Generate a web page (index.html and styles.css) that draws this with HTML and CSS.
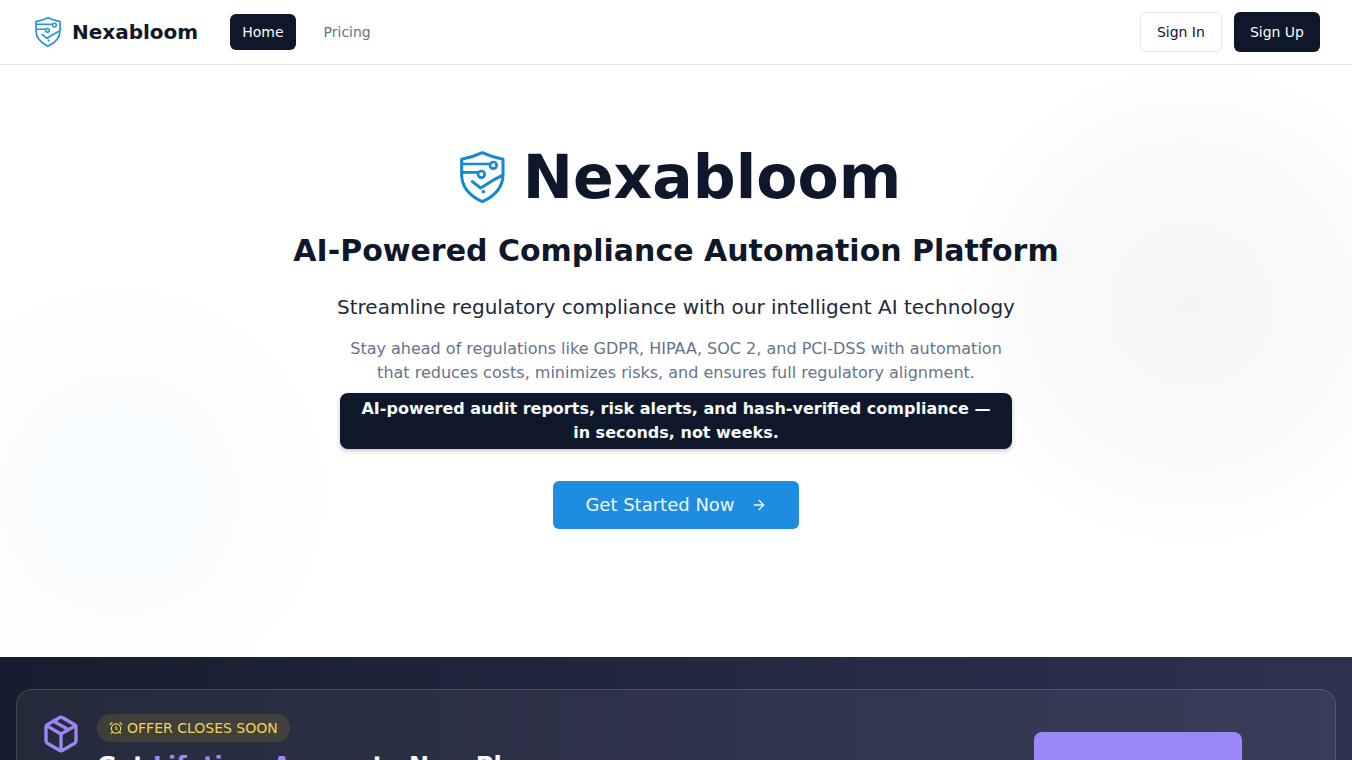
FILE: index.html
```html
<!DOCTYPE html>
<html lang="en">
<head>
<meta charset="utf-8">
<title>Nexabloom</title>
<link rel="stylesheet" href="styles.css">
</head>
<body>
<header class="nav">
  <div class="nav-left">
    <a class="brand" href="#">
      <svg class="shield shield-sm" viewBox="47.5 29 165 165" fill="none" stroke="currentColor" stroke-linecap="round" stroke-linejoin="round"><path stroke-width="9" d="M130 38 Q160 52 192 58 V104 C192 145 162 170 130 185 C98 170 68 145 68 104 V58 Q100 52 130 38 Z"/><path stroke-width="8" d="M70 72 H152 M70 97 H117"/><circle stroke-width="8" cx="163" cy="76" r="10"/><circle stroke-width="8" cx="127" cy="103" r="10"/><path stroke-width="9" d="M100 125 L125 144 L160 122 L190 106"/><circle cx="133" cy="155" r="4" fill="currentColor" stroke-width="3"/></svg>
      <span>Nexabloom</span>
    </a>
    <nav class="links">
      <a class="link link-active" href="#">Home</a>
      <a class="link" href="#">Pricing</a>
    </nav>
  </div>
  <div class="nav-right">
    <a class="btn btn-outline" href="#">Sign In</a>
    <a class="btn btn-dark" href="#">Sign Up</a>
  </div>
</header>

<main>
  <section class="hero">
    <div class="blob blob-left"></div>
    <div class="blob blob-right"></div>
    <div class="hero-inner">
      <h1 class="hero-title">
        <svg class="shield shield-lg" viewBox="36 27 168 168" fill="none" stroke="currentColor" stroke-linecap="round" stroke-linejoin="round"><path stroke-width="9" d="M130 38 Q160 52 192 58 V104 C192 145 162 170 130 185 C98 170 68 145 68 104 V58 Q100 52 130 38 Z"/><path stroke-width="8" d="M70 72 H152 M70 97 H117"/><circle stroke-width="8" cx="163" cy="76" r="10"/><circle stroke-width="8" cx="127" cy="103" r="10"/><path stroke-width="9" d="M100 125 L125 144 L160 122 L190 106"/><circle cx="133" cy="155" r="4" fill="currentColor" stroke-width="3"/></svg>
        <span>Nexabloom</span>
      </h1>
      <h2 class="hero-sub">AI-Powered Compliance Automation Platform</h2>
      <p class="hero-lead">Streamline regulatory compliance with our intelligent AI technology</p>
      <p class="hero-text">Stay ahead of regulations like GDPR, HIPAA, SOC 2, and PCI-DSS with automation that reduces costs, minimizes risks, and ensures full regulatory alignment.</p>
      <p class="hero-pill">AI-powered audit reports, risk alerts, and hash-verified compliance — in seconds, not weeks.</p>
      <a class="cta" href="#">Get Started Now
        <svg class="cta-arrow" viewBox="0 0 24 24" fill="none" stroke="currentColor" stroke-width="2" stroke-linecap="round" stroke-linejoin="round"><path d="M5 12h14M12 5l7 7-7 7"/></svg>
      </a>
    </div>
  </section>

  <section class="offer">
    <div class="offer-card">
      <div class="offer-main">
        <svg class="offer-icon" viewBox="0 0 24 24" fill="none" stroke="currentColor" stroke-width="2" stroke-linecap="round" stroke-linejoin="round"><path d="M21 8a2 2 0 0 0-1-1.73l-7-4a2 2 0 0 0-2 0l-7 4A2 2 0 0 0 3 8v8a2 2 0 0 0 1 1.73l7 4a2 2 0 0 0 2 0l7-4A2 2 0 0 0 21 16Z"/><path d="m3.3 7 8.7 5 8.7-5"/><path d="M12 22V12"/><path d="m7.5 4.27 9 5.15"/></svg>
        <div class="offer-copy">
          <span class="badge">
            <svg class="badge-icon" viewBox="0 0 24 24" fill="none" stroke="currentColor" stroke-width="2" stroke-linecap="round" stroke-linejoin="round"><circle cx="12" cy="13" r="8"/><path d="M12 9v4l2 2"/><path d="M5 3 2 6"/><path d="m22 6-3-3"/><path d="M6.38 18.7 4 21"/><path d="M17.64 18.67 20 21"/></svg>
            OFFER CLOSES SOON
          </span>
          <h3 class="offer-title">Get <em>Lifetime Access</em> to New Plans</h3>
        </div>
      </div>
      <div class="offer-side">
        <a class="offer-btn" href="#">Claim Offer</a>
      </div>
    </div>
  </section>
</main>
</body>
</html>
```
FILE: styles.css
```css
* { box-sizing: border-box; }
html, body { margin: 0; padding: 0; }
body {
  font-family: "DejaVu Sans", sans-serif;
  color: #0f172a;
  background: #fff;
}
a { text-decoration: none; color: inherit; }
h1, h2, h3, p { margin: 0; }

.nav {
  height: 65px;
  padding: 0 32px;
  display: flex;
  align-items: center;
  justify-content: space-between;
  background: #fff;
  border-bottom: 1px solid #e5e7eb;
}
.nav-left { display: flex; align-items: center; gap: 32px; }
.brand {
  display: flex;
  align-items: center;
  gap: 8px;
  font-size: 20px;
  font-weight: 700;
  line-height: 28px;
  color: #0f172a;
}
.shield { color: #1488d0; flex: none; display: block; }
.shield-sm { width: 32px; height: 32px; color: #2a94d8; }
.shield-lg { width: 56px; height: 56px; }
.links { display: flex; align-items: center; gap: 4px; }
.link {
  font-size: 14px;
  line-height: 20px;
  padding: 8px 12px;
  border-radius: 6px;
  color: #6b7280;
  margin-right: 4px;
}
.link-active { background: #0f172a; color: #f8fafc; height: 36px; margin-right: 12px; }
.nav-right { display: flex; align-items: center; gap: 12px; }
.btn {
  height: 40px;
  display: flex;
  align-items: center;
  font-size: 14px;
  border-radius: 6px;
  padding: 0 16px;
}
.btn-outline { background: #fff; border: 1px solid #e5e7eb; color: #0f172a; }
.btn-dark { background: #0f172a; color: #f8fafc; }

.hero {
  position: relative;
  height: 592px;
  overflow: hidden;
  background: #fff;
}
.blob { position: absolute; border-radius: 50%; }
.blob-left {
  left: -100px;
  top: 210px;
  width: 440px;
  height: 440px;
  background: radial-gradient(circle, rgba(30, 143, 220, 0.032) 0%, rgba(30, 143, 220, 0.02) 40%, rgba(30, 143, 220, 0) 74%);
}
.blob-right {
  left: 950px;
  top: 0;
  width: 480px;
  height: 480px;
  background: radial-gradient(circle, rgba(100, 116, 139, 0.07) 0%, rgba(100, 116, 139, 0.042) 40%, rgba(100, 116, 139, 0) 74%);
}
.hero-inner {
  position: relative;
  display: flex;
  flex-direction: column;
  align-items: center;
  text-align: center;
  padding-top: 72px;
}
.hero-title {
  display: flex;
  align-items: center;
  gap: 16px;
  font-size: 60px;
  line-height: 80px;
  font-weight: 700;
  color: #0f172a;
}
.hero-sub {
  margin-top: 16px;
  font-size: 30px;
  line-height: 36px;
  font-weight: 700;
  color: #0f172a;
}
.hero-lead {
  margin-top: 24px;
  font-size: 20px;
  line-height: 28px;
  color: #1e293b;
}
.hero-text {
  margin-top: 16px;
  width: 672px;
  font-size: 16px;
  line-height: 24px;
  color: #64748b;
}
.hero-pill {
  margin-top: 8px;
  width: 672px;
  padding: 4px 16px;
  font-size: 16px;
  line-height: 24px;
  font-weight: 700;
  color: #f8fafc;
  background: #0f172a;
  border-radius: 8px;
  box-shadow: 0 2px 4px rgba(15, 23, 42, 0.25);
}
.cta {
  margin-top: 32px;
  width: 246px;
  height: 48px;
  padding-bottom: 1px;
  display: flex;
  align-items: center;
  justify-content: center;
  gap: 16px;
  font-size: 18px;
  color: #f0f9ff;
  background: #1e8ce0;
  border-radius: 6px;
}
.cta-arrow { width: 16px; height: 16px; }

.offer {
  padding: 32px 16px;
  background: linear-gradient(90deg, #171d2e 0%, #2e3150 100%);
}
.offer-card {
  display: flex;
  justify-content: space-between;
  padding: 24px 93px 24px 24px;
  border: 1px solid rgba(255, 255, 255, 0.14);
  border-radius: 16px;
  background: rgba(255, 255, 255, 0.06);
  height: 240px;
}
.offer-main { display: flex; gap: 16px; align-items: flex-start; }
.offer-icon { width: 40px; height: 40px; color: #9b87f5; flex: none; }
.offer-copy { display: flex; flex-direction: column; align-items: flex-start; gap: 8px; }
.badge {
  display: inline-flex;
  align-items: center;
  gap: 4px;
  height: 28px;
  padding: 0 12px;
  font-size: 14px;
  border-radius: 999px;
  color: #f0d456;
  background: rgba(250, 204, 21, 0.12);
}
.badge-icon { width: 14px; height: 14px; }
.offer-title { font-size: 24px; line-height: 32px; font-weight: 700; color: #fff; }
.offer-title em { font-style: normal; color: #9b87f5; }
.offer-side { padding-top: 18px; }
.offer-btn {
  display: flex;
  align-items: center;
  justify-content: center;
  width: 208px;
  height: 80px;
  border-radius: 8px;
  background: #9b87f5;
  color: #fff;
  font-weight: 700;
}
```
